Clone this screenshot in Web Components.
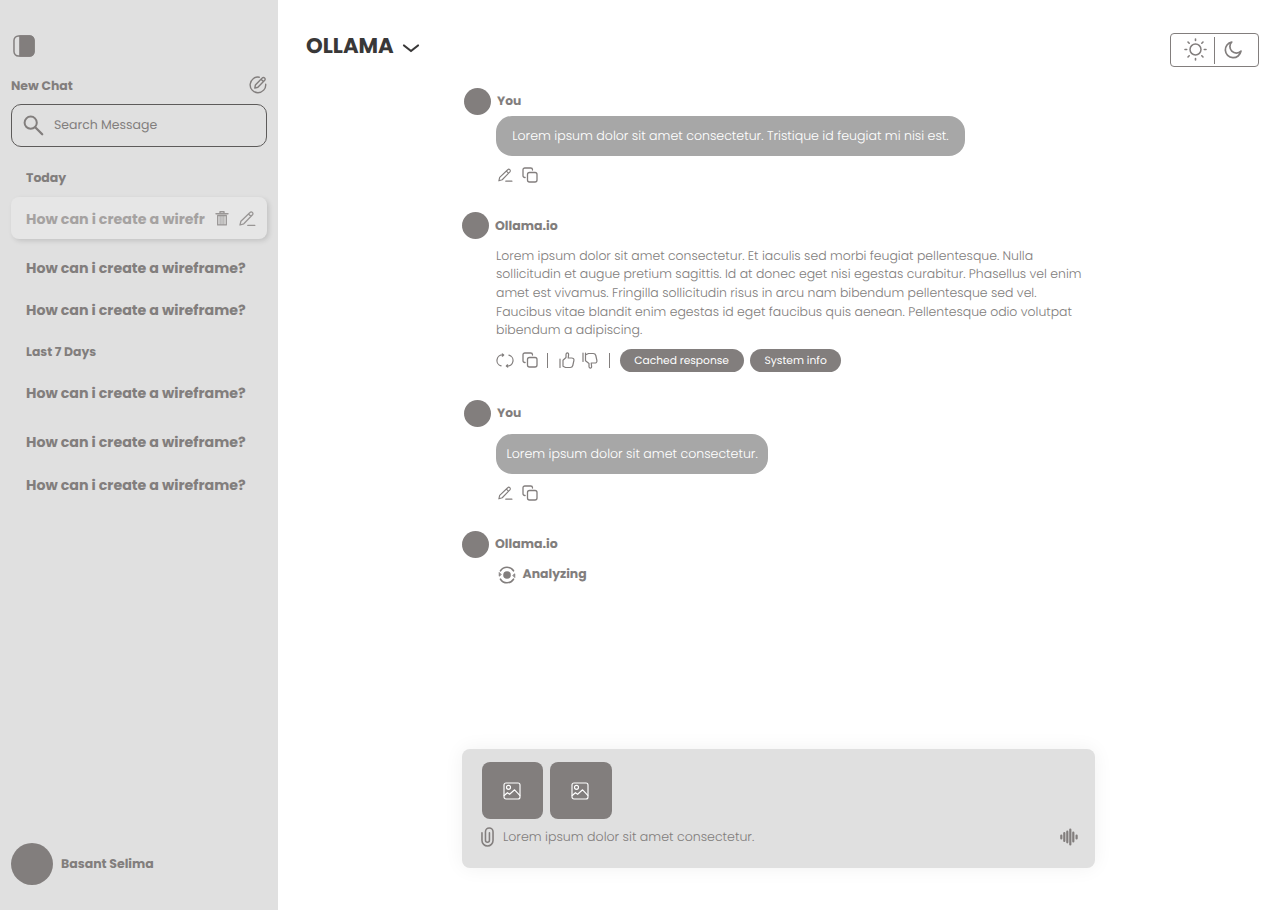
<!DOCTYPE html>
<html lang="en">
<head>
<meta charset="utf-8">
<title>Ollama chat</title>
<style>
html,body{margin:0;height:100%}
body{font-family:Poppins,Inter,"Open Sans",sans-serif;color:#827e7d;background:#fff;overflow:hidden;font-feature-settings:"cv11" 1;text-rendering:geometricPrecision;-webkit-font-smoothing:antialiased}
</style>
</head>
<body>
<chat-app></chat-app>
<script>
const ICONS = {
  panel:'<rect x="1" y="1" width="20.5" height="20.5" rx="4.5" stroke-width="1.5"/><path d="M7 1h10a4.5 4.5 0 0 1 4.5 4.5v11.500a4.500 4.500 0 0 1-4.500 4.500H7z" fill="currentColor"/>',
  compose:'<path d="M10.300 1.200A7.800 7.800 0 1 0 16.700 8.200M5.800 12.100l.6-3.100 6.800-7a1.650 1.650 0 0 1 2.500 2.300l-6.800 7zM12 3.300l2.400 2.200" stroke-width="1.400"/>',
  search:'<circle cx="7.700" cy="7.700" r="6.100" stroke-width="2"/><path d="M12.200 12.200l7 7" stroke-width="2.300"/>',
  trash:'<path d="M0 2.700h12M4 2.200V.8h4v1.400" stroke-width="1.400"/><path d="M1.700 4.500v9.400h8.600V4.500z" stroke-width="1.300"/><path d="M4.100 4.500v9M6 4.500v9M7.900 4.500v9" stroke-width=".9"/>',
  pen:'<path d="M1 14l.9-3.800L11 1.500a1.600 1.600 0 0 1 2.500 2.300l-8.700 9zM9.500 3.100l2.400 2.200M8.800 14.400h7" stroke-width="1.300"/>',
  copy:'<rect x="5.500" y="5.500" width="9.500" height="9.500" rx="2"/><path d="M3.100 10.500h-.3A1.800 1.800 0 0 1 1 8.700V2.800A1.800 1.800 0 0 1 2.800 1h5.900a1.800 1.800 0 0 1 1.800 1.800v.3"/>',
  chevron:'<path d="M1 1.500l7 5.500 7-5.500" stroke-width="2.200"/>',
  sun:'<circle cx="11.500" cy="11.500" r="5.500" stroke-width="1.500"/><path d="M11.500 1v1.500M11.500 20.500V22M1 11.500h1.700M20.300 11.500h1.700M4 4l1.200 1.200M17.800 17.800L19 19M4 19l1.200-1.200M17.800 5.200L19 4" stroke-width="1.600"/>',
  moon:'<path d="M7.800 1A7.900 7.900 0 1 0 17 10.200 6 6 0 0 1 7.800 1z" stroke-width="1.700"/>',
  refresh:'<path d="M6.600 2H6a5.500 5.500 0 0 0-1.900 10.800M5.300.9L6.700 2 5.400 3.200M9.400 13h.6a5.500 5.500 0 0 0 1.900-10.800M10.700 14.100L9.300 13l1.300-1.200" stroke-width="1.200"/>',
  up:'<path d="M1 7v8.500M4 8.200l3-2.700V2.800C7 .1 9.800.2 9.600 2.800L9.200 6h3.500c1.500 0 2.500 1.100 2.200 2.500l-1.100 5c-.3 1.300-1.300 2-2.600 2H6.500L4 14.300z" stroke-width="1.200"/>',
  down:'<path d="M1 1v8.500M3.500 1v7.800l3.500 2.700v2.700c0 2.700 2.800 2.600 2.600 0L9.200 11h3.500c1.500 0 2.500-1.100 2.200-2.500l-1.100-5c-.3-1.300-1.300-2-2.600-2H6.500L3.800 2.800" stroke-width="1.200"/>',
  analyze:'<circle cx="9" cy="9" r="3.800" fill="currentColor" stroke="none"/><path d="M2.500 4.800a7.700 7.700 0 0 1 13 0M15.500 13.200a7.700 7.700 0 0 1-13 0" stroke-width="1.600"/><path d="M1.200 6.800v3.400l1.800-1.400zM16.800 11.200V7.800L15 9.200z" fill="currentColor" stroke-width=".8"/>',
  image:'<g stroke-width="1.150"><rect x="1" y="1" width="16" height="16" rx="2"/><circle cx="5.500" cy="5.300" r="2"/><path d="M1.200 13.500l3.200-2.800 2.200 1.600 5-4.500 5.200 5.500"/></g>',
  clip:'<path d="M1 5.800v8a5.700 5.700 0 0 0 11.400 0V4.900a3.900 3.900 0 0 0-7.800 0v8.700a2.050 2.050 0 0 0 4.100 0V5.800" stroke-width="1.600"/>',
  wave:'<path d="M1.300 7.500v3M4.300 5v8M7.300 3.700v10.600M10.300 1.500v15M13.300 4.500v9M16.600 7.500v3" stroke-width="2.200"/>'
};
const define = (name, css, html, ready) => customElements.define(name, class extends HTMLElement {
  connectedCallback() {
    if (this.shadowRoot) return;
    const root = this.attachShadow({mode:'open'});
    root.innerHTML = '<style>*{box-sizing:border-box}' + css + '</style>' + (typeof html === 'function' ? html(this) : html);
    if (ready) ready(this, root);
  }
});

/* Icon: name, w, h */
define('ui-icon', ':host{display:inline-flex;flex:none}svg{display:block;overflow:visible}',
  el => { const w = el.getAttribute('w'), h = el.getAttribute('h');
    return `<svg width="${w}" height="${h}" viewBox="0 0 ${el.getAttribute('vb') || w + ' ' + h}" fill="none" stroke="currentColor" stroke-width="1.3" stroke-linecap="round" stroke-linejoin="round">${ICONS[el.getAttribute('name')]}</svg>`; });

/* One line of text, sized to a given measure */
define('ui-text', ':host{display:block;white-space:nowrap;flex:none;padding-top:var(--dy,1.500px)}span{display:inline-block}:host([b]){font-weight:700}:host([l]){font-weight:300}',
  '<span><slot></slot></span>',
  (el, root) => {
    const span = root.querySelector('span'), w = +el.getAttribute('w');
    el.style.fontSize = '20px';
    el.style.fontSize = 20 * (w + .3) / span.getBoundingClientRect().width + 'px';
    el.style.width = w + 'px';
  });

define('ui-avatar', ':host{display:block;flex:none;width:27px;height:27px;border-radius:50%;background:#827e7d}:host([large]){width:42px;height:42px}', '');

define('chat-link', `:host{display:flex;align-items:center;height:var(--h,42px);padding:0 0 0 15px;box-sizing:border-box}
  :host([active]){background:#e6e6e6;border-radius:8px;box-shadow:2px 2px 5px rgba(0,0,0,.13);color:#a5a2a1}
  .tools{display:flex;align-items:center;gap:11px;margin:1px 0 0 11.500px;color:#999695}`,
  el => '<slot></slot>' + (el.hasAttribute('active') ? '<div class="tools"><ui-icon name="trash" w="12" h="15"></ui-icon><ui-icon name="pen" w="17" h="16"></ui-icon></div>' : ''));

define('app-sidebar', `:host{display:flex;flex-direction:column;box-sizing:border-box;width:277.500px;height:910px;background:#e0e0e0;padding:35px 10.500px 25px 11px}
  .toggle{margin-left:2px;height:23px}.new{display:flex;align-items:center;justify-content:space-between;height:38px;margin-top:8px}
  .search{display:flex;align-items:center;gap:11px;height:43px;border:1px solid #5d5b5a;border-radius:10px;padding:0 0 1px 11px;margin-bottom:10px}
  .user{display:flex;align-items:center;gap:8px;margin-top:auto}`,
  `<div class="toggle"><ui-icon name="panel" w="22" h="22" vb="22.500 22.500"></ui-icon></div>
  <div class="new"><ui-text b w="61.500" style="--dy:3.500px">New Chat</ui-text><ui-icon name="compose" w="18" h="17" style="margin-top:-1px"></ui-icon></div>
  <div class="search"><ui-icon name="search" w="20" h="20"></ui-icon><ui-text w="103" style="--dy:2px">Search Message</ui-text></div>
  <chat-link style="--h:40px"><ui-text b w="40" style="--dy:3px">Today</ui-text></chat-link>
  <chat-link active><ui-text b w="178.500" style="--dy:2.500px">How can i create a wirefr</ui-text></chat-link>
  <chat-link style="margin-top:8px"><ui-text b w="219.500">How can i create a wireframe?</ui-text></chat-link>
  <chat-link style="--h:43px"><ui-text b w="219.500" style="--dy:0px">How can i create a wireframe?</ui-text></chat-link>
  <chat-link style="--h:38px"><ui-text b w="70" style="--dy:3px">Last 7 Days</ui-text></chat-link>
  <chat-link style="--h:46px"><ui-text b w="219.500">How can i create a wireframe?</ui-text></chat-link>
  <chat-link style="--h:52px"><ui-text b w="219.500">How can i create a wireframe?</ui-text></chat-link>
  <chat-link style="--h:34px"><ui-text b w="219.500">How can i create a wireframe?</ui-text></chat-link>
  <div class="user"><ui-avatar large></ui-avatar><ui-text b w="92.500">Basant Selima</ui-text></div>`);

define('app-header', `:host{display:flex;align-items:flex-start;justify-content:space-between;box-sizing:border-box;padding:33px 21px 0 28.500px;height:87px}
  .model{display:flex;align-items:center;gap:9px;color:#393838;height:25px}
  .theme{display:flex;align-items:center;width:89px;height:34px;border:1px solid #827e7d;border-radius:4px;padding-left:13px}
  i{width:1px;height:27px;background:#827e7d;margin:0 9px 0 7px}`,
  `<div class="model"><ui-text b w="87.500" style="--dy:2px">OLLAMA</ui-text><ui-icon name="chevron" w="16" h="8" style="margin-top:5px"></ui-icon></div>
  <div class="theme"><ui-icon name="sun" w="23" h="23" style="margin-top:-1px"></ui-icon><i></i><ui-icon name="moon" w="18" h="18"></ui-icon></div>`);

define('chat-message', `:host{display:block;height:var(--h)}
  .who{display:flex;align-items:center;gap:6px;height:27px}:host([me]) .who{padding-left:2px}
  .body{padding-left:34px}`,
  el => `<div class="who"><ui-avatar></ui-avatar><ui-text b style="--dy:2px" w="${el.hasAttribute('me') ? 24 : 62.5}">${el.getAttribute('from')}</ui-text></div><div class="body"><slot></slot></div>`);

define('chat-bubble', ':host{display:flex;align-items:center;justify-content:center;width:var(--w);height:40px;border-radius:16px;background:#a7a7a7;color:#fff;--dy:2.500px}', '<slot></slot>');
define('edit-actions', ':host{display:flex;align-items:center;gap:9px;padding:11.500px 0 0 2px}', '<ui-icon name="pen" w="15" h="15" vb="17 16"></ui-icon><ui-icon name="copy" w="16" h="16"></ui-icon>');
define('ui-pill', ':host{display:flex;align-items:center;justify-content:center;width:var(--w);height:23px;border-radius:12px;background:#827e7d;color:#fff}', '<slot></slot>');
define('reply-actions', ':host{display:flex;align-items:center;height:23px;margin-top:8px}i{width:1px;height:15px;background:#827e7d}',
  `<ui-icon name="refresh" w="16" h="15" style="margin:0 9px 0 1px"></ui-icon><ui-icon name="copy" w="16" h="16"></ui-icon><i style="margin:0 11px 0 9px"></i>
  <ui-icon name="up" w="16" h="17" style="margin-right:7px"></ui-icon><ui-icon name="down" w="16" h="17"></ui-icon><i style="margin:0 10px 0 11px"></i>
  <ui-pill style="--w:124px;margin-right:6.500px;margin-left:-.5px"><ui-text w="94.500" style="--dy:1px">Cached response</ui-text></ui-pill><ui-pill style="--w:91px"><ui-text w="62" style="--dy:1px">System info</ui-text></ui-pill>`);

define('chat-thread', `:host{display:block;box-sizing:border-box;margin-left:184.500px;width:633px;height:662px;padding-top:.5px}
  .reply{padding-top:8.500px}.reply ui-text{--dy:0px;line-height:18.700px;height:18.700px}.busy{display:flex;align-items:center;gap:6.500px;padding:7.500px 0 0 2px}`,
  `<chat-message me from="You" style="--h:124.500px"><chat-bubble style="--w:469px;margin-top:1px"><ui-text l w="436.500">Lorem ipsum dolor sit amet consectetur. Tristique id feugiat mi nisi est.</ui-text></chat-bubble><edit-actions></edit-actions></chat-message>
  <chat-message from="Ollama.io" style="--h:187.500px"><div class="reply">
    <ui-text l w="537.500">Lorem ipsum dolor sit amet consectetur. Et iaculis sed morbi feugiat pellentesque. Nulla</ui-text>
    <ui-text l w="586">sollicitudin et augue pretium sagittis. Id at donec eget nisi egestas curabitur. Phasellus vel enim</ui-text>
    <ui-text l w="541">amet est vivamus. Fringilla sollicitudin risus in arcu nam bibendum pellentesque sed vel.</ui-text>
    <ui-text l w="576">Faucibus vitae blandit enim egestas id eget faucibus quis aenean. Pellentesque odio volutpat</ui-text>
    <ui-text l w="146">bibendum a adipiscing.</ui-text></div><reply-actions></reply-actions></chat-message>
  <chat-message me from="You" style="--h:131px"><chat-bubble style="--w:272px;margin-top:7px"><ui-text l w="251">Lorem ipsum dolor sit amet consectetur.</ui-text></chat-bubble><edit-actions></edit-actions></chat-message>
  <chat-message from="Ollama.io"><div class="busy"><ui-icon name="analyze" w="18" h="18" style="margin-top:1px"></ui-icon><ui-text b w="64" style="--dy:.5px">Analyzing</ui-text></div></chat-message>`);

define('chat-composer', `:host{display:block;box-sizing:border-box;margin-left:184.500px;width:633px;height:119px;border-radius:8px;background:#e0e0e0;box-shadow:0 0 20px rgba(0,0,0,.06);padding:12.500px 17px 0 20px}
  .files{display:flex;gap:7px;margin-left:-.5px}.file{display:flex;align-items:center;justify-content:center;width:61.500px;height:57.500px;border-radius:8px;background:#827e7d;color:#fff}
  .file ui-icon{margin:1px 1px 0 0}.entry{display:flex;align-items:center;height:35px}.wave{margin-left:auto}`,
  `<div class="files"><div class="file"><ui-icon name="image" w="18" h="18"></ui-icon></div><div class="file"><ui-icon name="image" w="18" h="18"></ui-icon></div></div>
  <div class="entry"><ui-icon name="clip" w="13" h="20" style="margin-left:-1px" vb="13.400 20.500"></ui-icon><ui-text l w="251" style="margin-left:9px;--dy:2.500px">Lorem ipsum dolor sit amet consectetur.</ui-text><ui-icon class="wave" name="wave" w="18" h="18"></ui-icon></div>`);

define('chat-app', ':host{display:grid;grid-template-columns:277.500px 1fr;height:910px;width:1280px}main{min-width:0}',
  '<app-sidebar></app-sidebar><main><app-header></app-header><chat-thread></chat-thread><chat-composer></chat-composer></main>');
</script>
</body>
</html>
